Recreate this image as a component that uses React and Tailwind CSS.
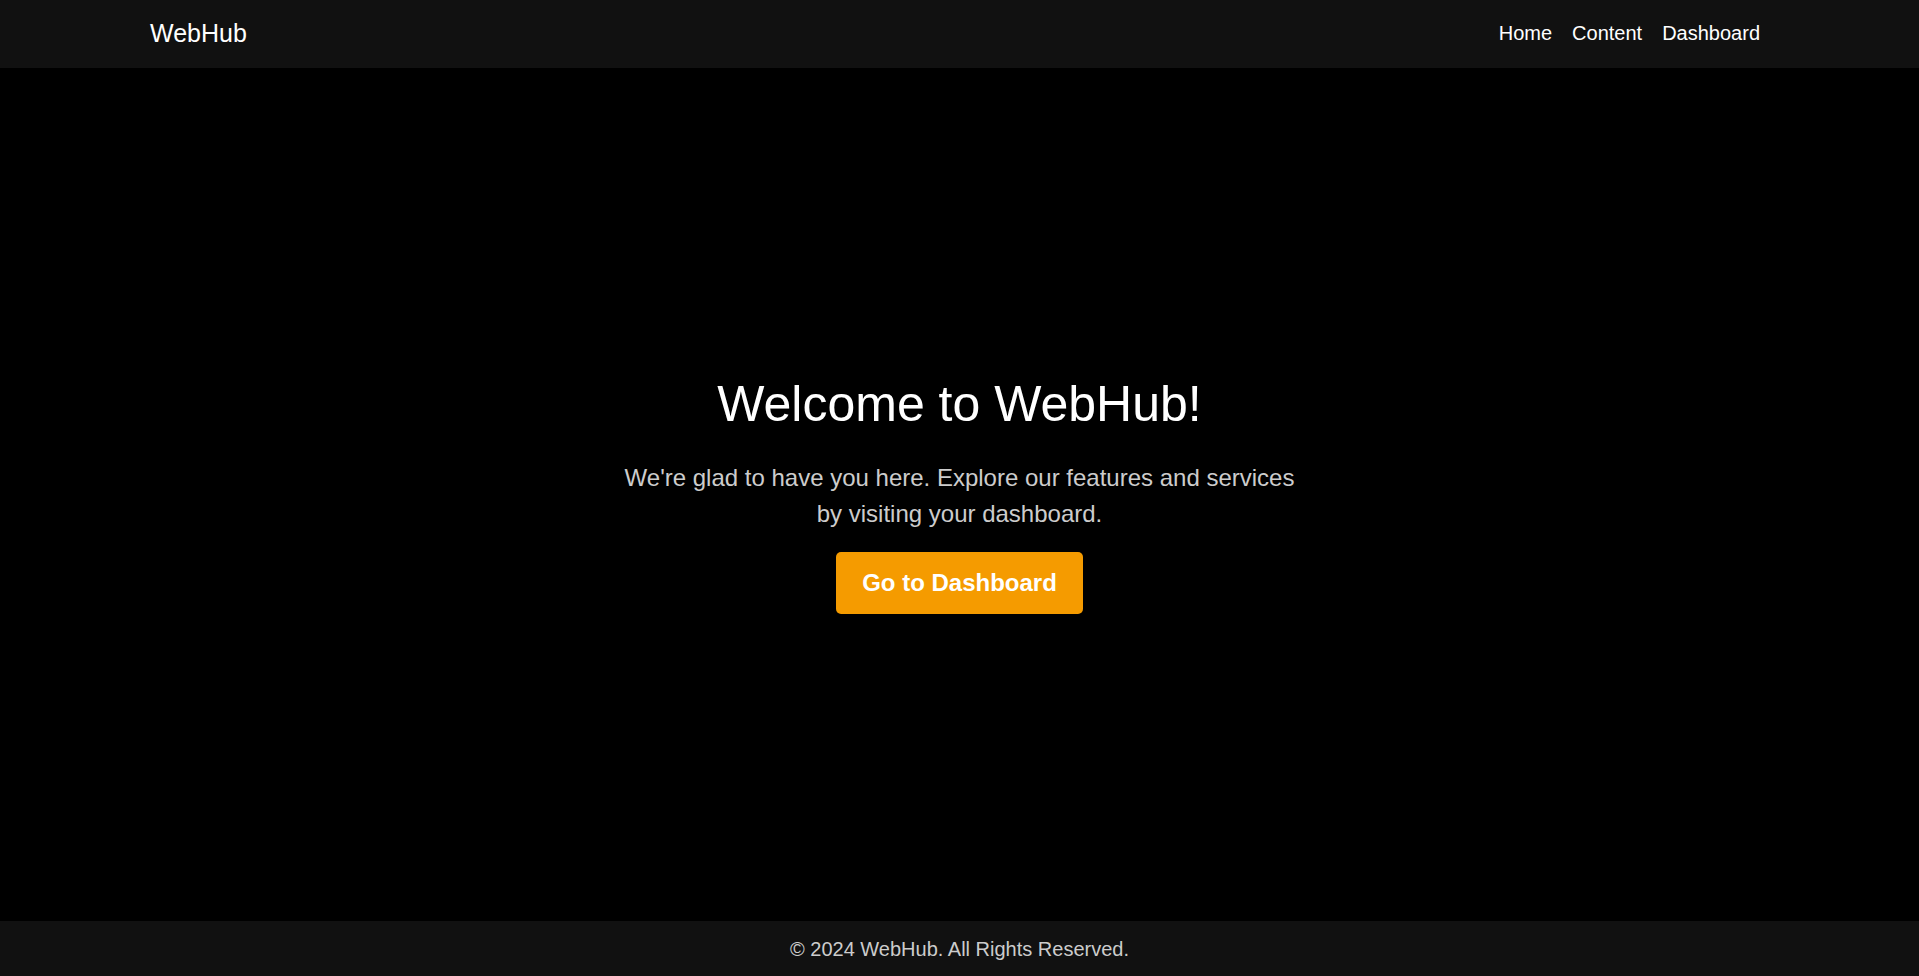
export default function App() {
  return (
    <div className="h-screen overflow-hidden flex flex-col bg-black font-['Liberation_Sans',Arial,sans-serif]">
      <header className="h-[68px] shrink-0 bg-[#111111] flex items-center justify-between pl-[150px] pr-[159px]">
        <div className="text-white text-[25px] leading-[32px] pb-[2px]">WebHub</div>
        <nav className="flex items-center gap-5 text-white text-[20px] leading-[30px] pb-[2px]">
          <a href="#">Home</a>
          <a href="#">Content</a>
          <a href="#">Dashboard</a>
        </nav>
      </header>

      <main className="flex-1 flex flex-col items-center justify-center text-center">
        <h1 className="text-white text-[50px] leading-[58px] mb-[27px]">Welcome to WebHub!</h1>
        <p className="text-[#cccccc] text-[24px] leading-9 max-w-2xl mb-[20px]">
          We're glad to have you here. Explore our features and services by visiting your dashboard.
        </p>
        <button className="h-[62px] px-[26px] rounded-[5px] bg-[#f59b00] text-white text-[24px] font-bold">
          Go to Dashboard
        </button>
      </main>

      <footer className="h-[55px] shrink-0 bg-[#111111] flex items-center justify-center text-[#cccccc] text-[20px]">
        © 2024 WebHub. All Rights Reserved.
      </footer>
    </div>
  );
}
